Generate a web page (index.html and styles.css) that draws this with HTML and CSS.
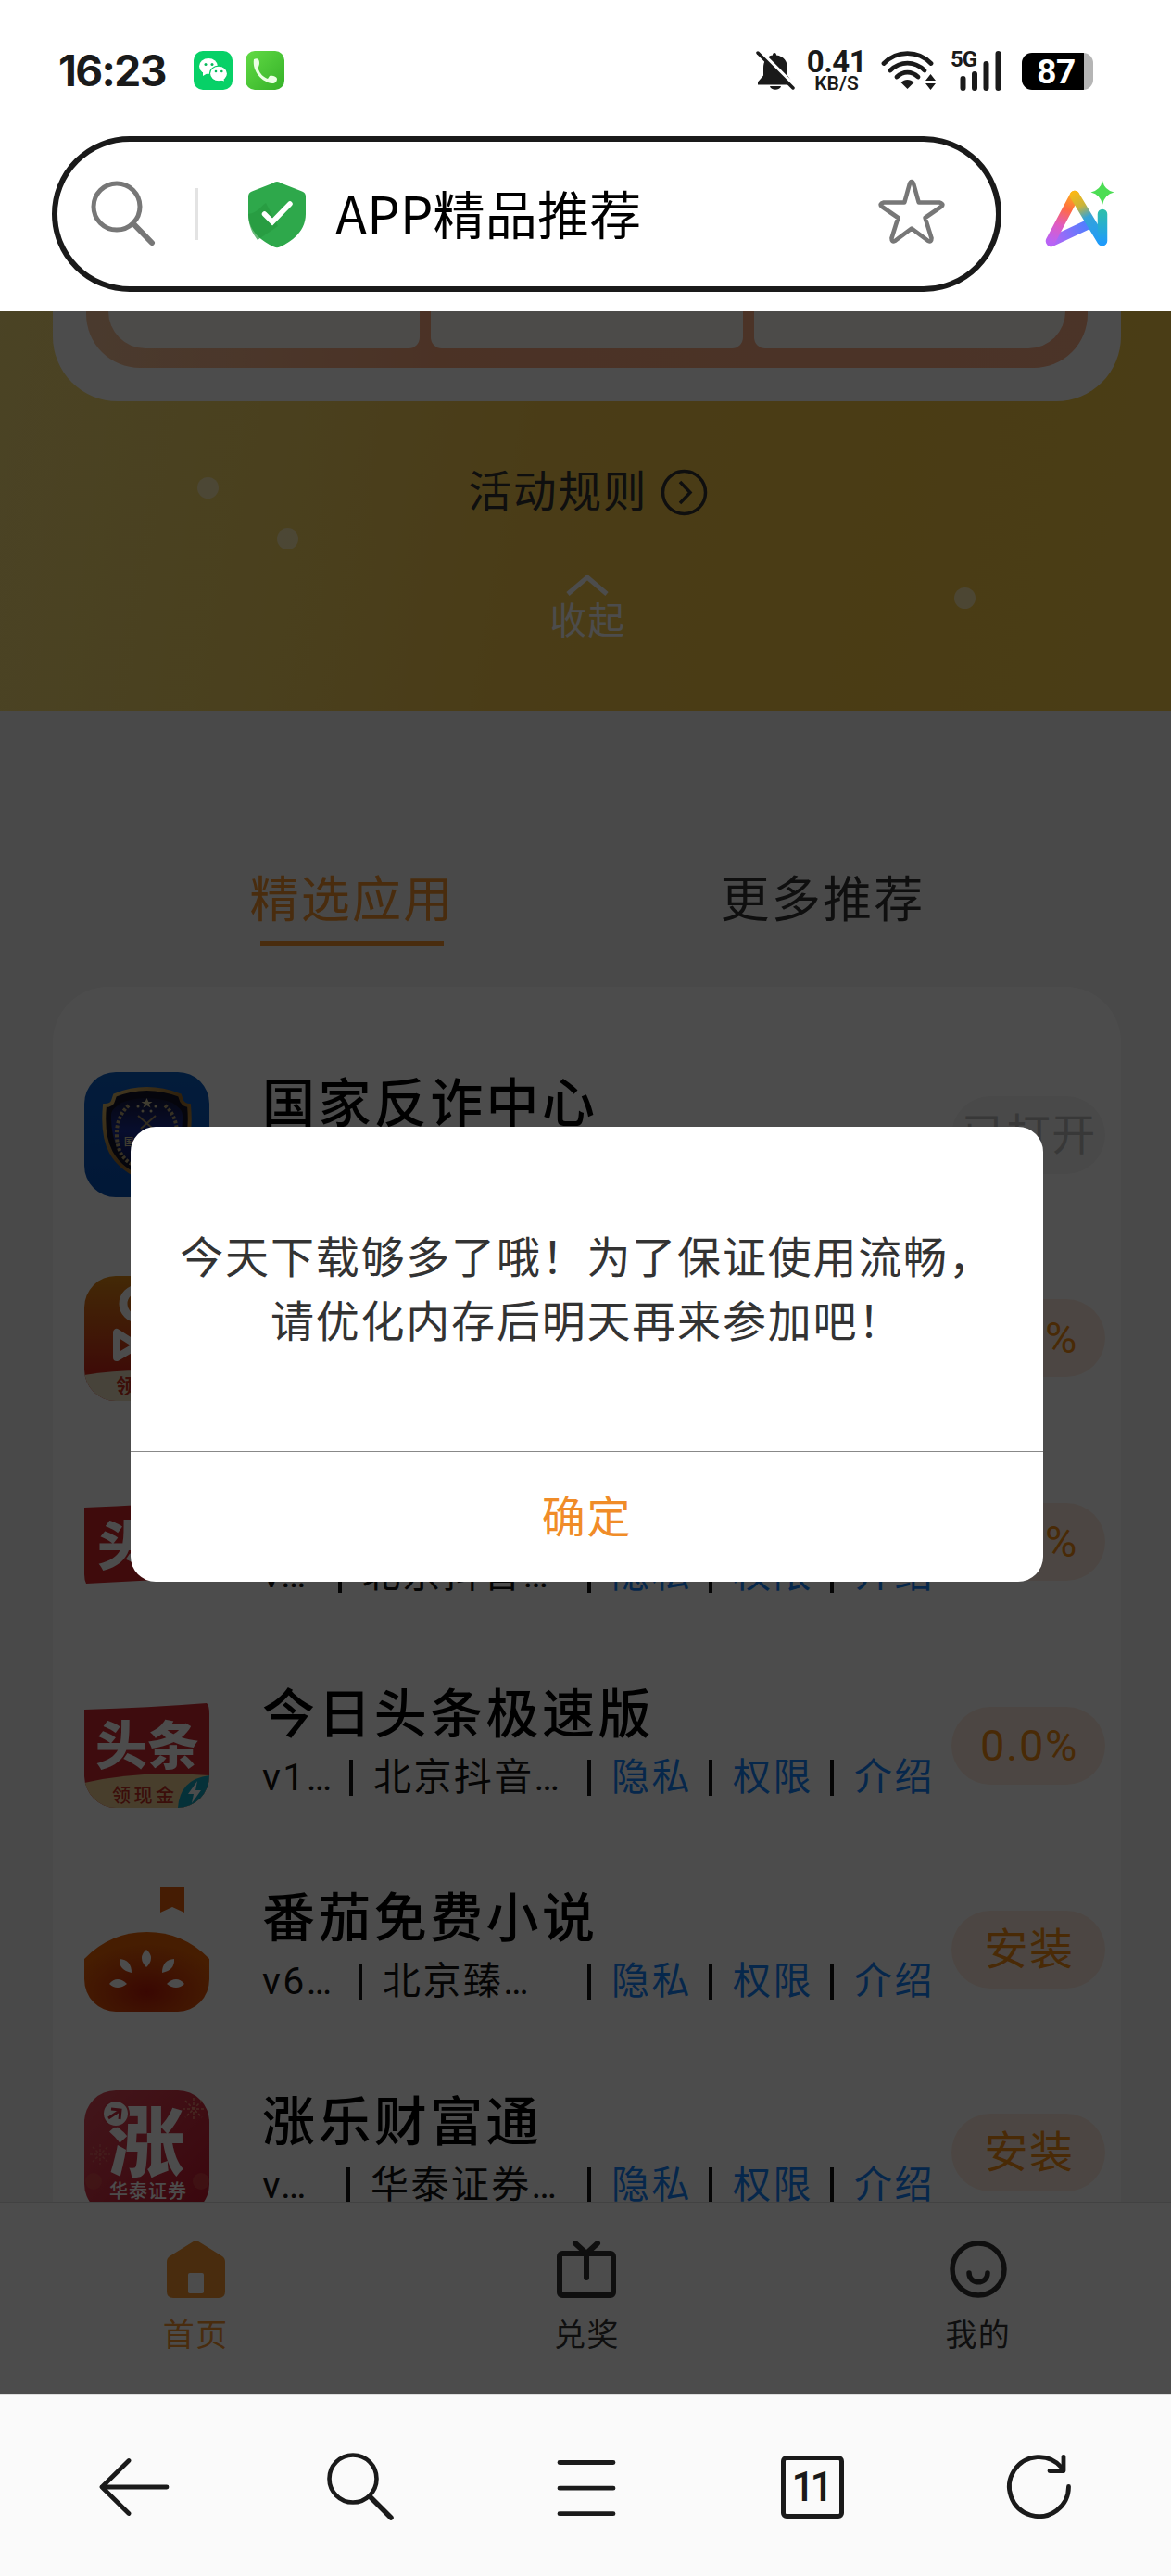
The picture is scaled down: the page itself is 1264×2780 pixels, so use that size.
FILE: index.html
```html
<!DOCTYPE html>
<html lang="zh-CN">

<head>
  <meta charset="UTF-8">
  <meta name="viewport" content="width=device-width, initial-scale=1.0">
  <title>APP精品推荐</title>
  <link rel="stylesheet" href="styles.css">
</head>

<body>

  <!-- 状态栏 -->
  <div class="status">
    <span class="time">16:23</span>
    <svg class="app-dot" viewBox="0 0 42 42">
      <rect width="42" height="42" rx="10" fill="#07d167" />
      <ellipse cx="16" cy="16.5" rx="10" ry="8.5" fill="#fff" />
      <path d="M10 22l0 5 5-3z" fill="#fff" />
      <ellipse cx="27" cy="24.500" rx="9.600" ry="8.300" fill="#fff" stroke="#07cb65" stroke-width="1.300" />
      <path d="M28 31l5 1.500-1-4z" fill="#fff" />
      <circle cx="13" cy="14.500" r="1.500" fill="#07b95c" />
      <circle cx="20" cy="14.500" r="1.500" fill="#07b95c" />
      <circle cx="24" cy="22" r="1.300" fill="#07b95c" />
      <circle cx="30.300" cy="22" r="1.300" fill="#07b95c" />
    </svg>
    <svg class="app-dot phone" viewBox="0 0 42 42">
      <defs>
        <linearGradient id="gPhone" x1="0" y1="0" x2="1" y2="1">
          <stop offset="0" stop-color="#62db45" />
          <stop offset="1" stop-color="#34b128" />
        </linearGradient>
      </defs>
      <rect width="42" height="42" rx="10" fill="url(#gPhone)" />
      <path d="M9 9c4-2 6 0 6 4s-2 4-1 7c2 5 5 8 10 10l2-3c3-1 8 1 8 3 0 3-2 5-5 5C18 34 7 22 9 9z" fill="#eaffe4" />
    </svg>

    <div class="status-right">
      <svg class="bell" width="42" height="43" viewBox="0 0 42 43">
        <path d="M20 2c1.500 0 2 1 2 2.500 8 1 12 7 12 14v8l5 7v3H2v-3l6-7v-8c0-7 3-13 10-14 0-1.500.5-2.500 2-2.500z" fill="#1a1a1a" />
        <path d="M15 38h12c-1 5-11 5-12 0z" fill="#1a1a1a" />
        <path d="M3-1l41 41" stroke="#fff" stroke-width="4" />
        <path d="M2 2l38 38" stroke="#1a1a1a" stroke-width="3.500" stroke-linecap="round" />
      </svg>
      <div class="speed">
        <b>0.41</b>
        <span>KB/S</span>
      </div>
      <svg class="wifi" width="60" height="42" viewBox="0 0 60 42">
        <g fill="none" stroke="#1a1a1a" stroke-width="4.800" stroke-linecap="round">
          <path d="M3 13.500C17-1 40-1 54 13.500" />
          <path d="M10 21c11-10.500 26-10.500 37 0" />
          <path d="M17 28c7-6.500 16-6.500 23 0" />
        </g>
        <path d="M28.500 41l-7-7c4-4 10-4 14 0z" fill="#1a1a1a" />
        <path d="M53.500 25l5.500 7H48zM53.500 42l5.500-7H48z" fill="#1a1a1a" />
      </svg>
      <div class="signal">
        <span>5G</span>
        <svg width="46" height="43" viewBox="0 0 46 43">
          <path d="M3.500 30v10M16 25v15M28.500 14v26M41.500 3v37" stroke="#1a1a1a" stroke-width="6" stroke-linecap="round" />
        </svg>
      </div>
      <div class="battery"><span>87</span></div>
    </div>
  </div>

  <!-- 地址栏 -->
  <div class="address">
    <div class="address-box">
      <svg class="icon-search" width="72" height="72" viewBox="0 0 72 72" fill="none" stroke="#777" stroke-linecap="round">
        <circle cx="28" cy="28" r="25" stroke-width="5" />
        <path d="M46.500 47L66 67" stroke-width="6" />
      </svg>
      <i class="sep"></i>
      <svg class="icon-shield" width="64" height="73" viewBox="0 0 64 73">
        <path d="M32 1c2 0 3 1 4 1.500l23 9c3 1 4 3 4 6V36c0 17-13 29-28 35.500-2 1-4 1-6 0C14 65 1 53 1 36V17.500c0-3 1-5 4-6l23-9C29 2 30 1 32 1z" fill="#2ea84b" />
        <path d="M1 36c10-1 15-10 19-12l13 25-22 15C4 55 1 46 1 36z" fill="#26983f" opacity=".7" />
        <path d="M18.500 36l8.500 8.500L46 25" fill="none" stroke="#fff" stroke-width="5.500" stroke-linecap="round" />
      </svg>
      <span class="page-name">APP精品推荐</span>
      <svg class="icon-star" width="74" height="74" viewBox="0 0 74 74">
        <path d="M37 5Q38.500 5 39.300 8L44.700 27.500H67Q72.500 29 69 32L51.600 44 58.500 66Q58.500 70.500 55 69L37 55.500 19 69Q15.500 70.500 15.500 66L22.400 44 5 32Q1.500 29 7 27.500H29.300L34.700 8Q35.500 5 37 5z" fill="none" stroke="#777" stroke-width="4.600" stroke-linejoin="round" />
      </svg>
    </div>
    <svg class="icon-ai" width="78" height="76" viewBox="0 0 78 76">
      <defs>
        <linearGradient id="gLeft" gradientUnits="userSpaceOnUse" x1="32" y1="12" x2="8" y2="68">
          <stop offset="0" stop-color="#fdb813" />
          <stop offset=".35" stop-color="#ff6a45" />
          <stop offset=".65" stop-color="#e05bc0" />
          <stop offset="1" stop-color="#b863f5" />
        </linearGradient>
        <linearGradient id="gBase" gradientUnits="userSpaceOnUse" x1="8" y1="68" x2="48" y2="48">
          <stop offset="0" stop-color="#b863f5" />
          <stop offset="1" stop-color="#4a80ff" />
        </linearGradient>
        <linearGradient id="gRight" gradientUnits="userSpaceOnUse" x1="33" y1="12" x2="62" y2="68">
          <stop offset="0" stop-color="#fdb813" />
          <stop offset=".28" stop-color="#c9b43a" />
          <stop offset=".5" stop-color="#35a3d8" />
          <stop offset="1" stop-color="#1f9bfa" />
        </linearGradient>
        <linearGradient id="gStem" gradientUnits="userSpaceOnUse" x1="0" y1="32" x2="0" y2="68">
          <stop offset="0" stop-color="#2dc0a8" />
          <stop offset="1" stop-color="#1f9bfa" />
        </linearGradient>
      </defs>
      <g fill="none" stroke-width="10.500" stroke-linecap="round">
        <path d="M7.500 67L48 48" stroke="url(#gBase)" />
        <path d="M33 17L7 66" stroke="url(#gLeft)" />
        <path d="M33 17L62.500 66" stroke="url(#gRight)" />
        <path d="M63 37V66" stroke="url(#gStem)" />
      </g>
      <path d="M63 1q2 10 12.500 12.500Q65 16 63 27q-2-11-12.500-13.500Q61 11 63 1z" fill="#4cdd54" />
    </svg>
  </div>

  <!-- 网页内容 -->
  <div class="page">

    <div class="banner">
      <div class="prize">
        <div class="prize-grid">
          <div></div>
          <div></div>
          <div></div>
        </div>
      </div>
      <div class="rule">
        <span>活动规则</span>
        <svg width="51" height="51" viewBox="0 0 51 51" fill="none" stroke="#333" stroke-width="3.500">
          <circle cx="25.500" cy="25.500" r="23" />
          <path d="M21 14l11 11.500L21 37" />
        </svg>
      </div>
      <svg class="fold-arrow" width="46" height="24" viewBox="0 0 46 24" fill="none" stroke="#fff" stroke-width="5">
        <path d="M2 22L23 4l21 18" />
      </svg>
      <p class="fold">收起</p>
      <i class="dot dot1"></i>
      <i class="dot dot2"></i>
      <i class="dot dot3"></i>
    </div>

    <div class="tabs">
      <div class="tab on">精选应用</div>
      <div class="tab">更多推荐</div>
    </div>

    <div class="list">
      <div class="app">
        <svg class="logo" viewBox="0 0 135 135">
          <defs>
            <linearGradient id="gBlue" x1="0" y1="0" x2="0" y2="1">
              <stop offset="0" stop-color="#0d5fc4" />
              <stop offset="1" stop-color="#0550b8" />
            </linearGradient>
            <linearGradient id="gGold" x1="0" y1="0" x2="1" y2="1">
              <stop offset="0" stop-color="#e8c878" />
              <stop offset=".5" stop-color="#9c6b2a" />
              <stop offset="1" stop-color="#e0b560" />
            </linearGradient>
            <linearGradient id="gNavy" x1="0" y1="0" x2="0" y2="1">
              <stop offset="0" stop-color="#16183c" />
              <stop offset=".45" stop-color="#1a2f9a" />
              <stop offset="1" stop-color="#0c1040" />
            </linearGradient>
          </defs>
          <rect width="135" height="135" rx="34" fill="url(#gBlue)" />
          <path d="M33 25q34-14 70 0l2 6q3 5 8 5c4 42-6 65-45 81C29 102 18 78 22 36q8 0 9-5z" fill="#111328" stroke="url(#gGold)" stroke-width="4" />
          <path d="M40 33q27-10 55 0c8 6 11 8 11 14 0 30-9 48-38 61C39 96 29 78 29 47c0-6 3-8 11-14z" fill="url(#gNavy)" />
          <path d="M48 36q-14 12-13 34t18 30M87 36q14 12 13 34t-18 30" fill="none" stroke="#b9a676" stroke-width="4" stroke-dasharray="3 2" />
          <path d="M67.500 28l1.800 4h4.200l-3.500 2.500 1.500 4-4-2.500-4 2.500 1.500-4-3.500-2.500h4.200z" fill="#d8cda0" />
          <circle cx="58" cy="37" r="1.500" fill="#d8cda0" />
          <circle cx="77" cy="37" r="1.500" fill="#d8cda0" />
          <circle cx="63" cy="42" r="1.500" fill="#d8cda0" />
          <circle cx="72" cy="42" r="1.500" fill="#d8cda0" />
          <path d="M58 47l16 14M77 47L61 61" stroke="#a9936a" stroke-width="2" />
          <text x="43" y="79" font-size="10" font-weight="700" fill="#d8cda0">国家反诈</text>
        </svg>
        <div class="info">
          <h3>国家反诈中心</h3>
          <div class="sub"><span class="version">v2…</span><i></i><span class="company">公安部…</span><i></i><a>隐私</a><i></i><a>权限</a><i></i><a>介绍</a></div>
        </div>
        <div class="btn opened">已打开</div>
      </div>

      <div class="app">
        <svg class="logo" viewBox="0 0 135 135">
          <defs>
            <linearGradient id="gKuai" x1="0" y1="0" x2="0" y2="1">
              <stop offset="0" stop-color="#e08a14" />
              <stop offset=".75" stop-color="#cf2a1a" />
            </linearGradient>
            <clipPath id="rc"><rect width="135" height="135" rx="34" /></clipPath>
          </defs>
          <g clip-path="url(#rc)">
            <rect width="135" height="135" fill="url(#gKuai)" />
            <path d="M0 107q60-10 135 0v28H0z" fill="#efe0c4" />
            <circle cx="58" cy="30" r="16" fill="none" stroke="#fff" stroke-width="9" />
            <circle cx="92" cy="34" r="12" fill="none" stroke="#fff" stroke-width="8" />
            <path d="M35 61v27l22-13z" fill="none" stroke="#fff" stroke-width="8" stroke-linejoin="round" />
            <rect x="60" y="57" width="46" height="36" rx="8" fill="#fff" />
            <text x="34" y="126" font-size="21" font-weight="700" fill="#c9301c">领现金</text>
          </g>
        </svg>
        <div class="info">
          <h3>快手极速版</h3>
          <div class="sub"><span class="version">v1…</span><i></i><span class="company">北京快手…</span><i></i><a>隐私</a><i></i><a>权限</a><i></i><a>介绍</a></div>
        </div>
        <div class="btn">0.0%</div>
      </div>

      <div class="app">
        <svg class="logo" viewBox="0 0 135 135">
          <path d="M0 30Q70 27 135 22V106Q70 108 2 112Q0 108 0 102z" fill="#d3262a" />
          <text x="14" y="92" font-size="57" font-weight="900" fill="#fff">头条</text>
        </svg>
        <div class="info">
          <h3>今日头条</h3>
          <div class="sub"><span class="version">v…</span><i></i><span class="company">北京抖音…</span><i></i><a>隐私</a><i></i><a>权限</a><i></i><a>介绍</a></div>
        </div>
        <div class="btn">0.0%</div>
      </div>

      <div class="app">
        <svg class="logo" viewBox="0 0 135 135">
          <defs>
            <clipPath id="tc"><path d="M0 29Q70 27 132 22Q135 24 135 34V100A34 35 0 0 1 101 135H34A34 35 0 0 1 0 101z" /></clipPath>
          </defs>
          <g clip-path="url(#tc)">
            <rect width="135" height="135" fill="#d12a31" />
            <path d="M0 108q60-14 135-8v35H0z" fill="#f0cf94" />
            <path d="M135 100q-32 4-34 35h34z" fill="#12a5c0" />
            <path d="M122 106l-10 14h6l-2 10 10-14h-6z" fill="#fff" />
            <text x="12" y="88" font-size="56" font-weight="900" fill="#fff">头条</text>
            <text x="30" y="129" font-size="20" font-weight="500" letter-spacing="3.500" fill="#c53124">领现金</text>
          </g>
        </svg>
        <div class="info">
          <h3>今日头条极速版</h3>
          <div class="sub"><span class="version">v1…</span><i></i><span class="company">北京抖音…</span><i></i><a>隐私</a><i></i><a>权限</a><i></i><a>介绍</a></div>
        </div>
        <div class="btn">0.0%</div>
      </div>

      <div class="app">
        <svg class="logo" viewBox="0 0 135 135">
          <defs>
            <radialGradient id="gTomato" cx=".5" cy=".75" r=".6">
              <stop offset="0" stop-color="#c01a08" />
              <stop offset=".5" stop-color="#d64208" />
              <stop offset="1" stop-color="#ea6206" />
            </radialGradient>
          </defs>
          <path d="M82 0h26v28l-13-6-13 6z" fill="#e8600c" />
          <path d="M0 78Q28 49 67.500 49T135 78V100A34 35 0 0 1 101 135H34A34 35 0 0 1 0 100z" fill="url(#gTomato)" />
          <g fill="#fff">
            <path d="M67 68q5 4 5 9 0 5-5 10-5-5-5-10 0-5 5-9z" />
            <path d="M38 78q13 1 13 15-14-3-13-15z" />
            <path d="M97 78q-13 1-13 15 14-3 13-15z" />
            <path d="M27 105q4-5 9-5t10 5q-5 4-10 4t-9-4z" />
            <path d="M108 105q-4-5-9-5t-10 5q5 4 10 4t9-4z" />
          </g>
        </svg>
        <div class="info">
          <h3>番茄免费小说</h3>
          <div class="sub"><span class="version">v6…</span><i></i><span class="company">北京臻…</span><i></i><a>隐私</a><i></i><a>权限</a><i></i><a>介绍</a></div>
        </div>
        <div class="btn">安装</div>
      </div>

      <div class="app">
        <svg class="logo" viewBox="0 0 135 135">
          <defs>
            <linearGradient id="gZhang" x1="0" y1="0" x2="1" y2="1">
              <stop offset="0" stop-color="#de4a5a" />
              <stop offset="1" stop-color="#c3152c" />
            </linearGradient>
          </defs>
          <rect width="135" height="135" rx="34" fill="url(#gZhang)" />
          <g stroke="#ec8a72" stroke-width="1.500" stroke-dasharray="3 2">
            <path d="M118 8v24M106 20h24M109 11l18 18M127 11l-18 18" />
            <path d="M17 58v22M6 69h22M9 61l16 16M25 61L9 77" opacity=".5" />
          </g>
          <circle cx="10" cy="98" r="9" fill="#e0584e" opacity=".5" />
          <circle cx="126" cy="98" r="9" fill="#e0584e" opacity=".5" />
          <text x="26" y="86" font-size="82" font-weight="900" fill="#fff">涨</text>
          <circle cx="34" cy="25" r="14" fill="#fff" stroke="#d63c4d" stroke-width="2" />
          <path d="M26 30l12-8M29 20l10 1-1 10" fill="none" stroke="#c92b3f" stroke-width="3" />
          <text x="27" y="116" font-size="20" font-weight="500" letter-spacing="1" fill="#fff">华泰证券</text>
        </svg>
        <div class="info">
          <h3>涨乐财富通</h3>
          <div class="sub"><span class="version">v…</span><i></i><span class="company">华泰证券…</span><i></i><a>隐私</a><i></i><a>权限</a><i></i><a>介绍</a></div>
        </div>
        <div class="btn">安装</div>
      </div>
    </div>

    <div class="tabbar">
      <div class="tabbar-item on">
        <svg width="63" height="62" viewBox="0 0 63 62">
          <path d="M28 1.500q3.500-2.500 7 0L60 17q3 2 3 6v32q0 7-7 7H7q-7 0-7-7V23q0-4 3-6z" fill="#f39530" />
          <rect x="23" y="35" width="17" height="22" rx="2" fill="#fff" />
        </svg>
        <span>首页</span>
      </div>
      <div class="tabbar-item">
        <svg width="64" height="62" viewBox="0 0 64 62" fill="none" stroke="#333" stroke-width="6" stroke-linecap="round">
          <rect x="3" y="14" width="58" height="45" rx="3" />
          <path d="M32 14v26M20 3l12 11L44 3" />
        </svg>
        <span>兑奖</span>
      </div>
      <div class="tabbar-item">
        <svg width="62" height="62" viewBox="0 0 62 62" fill="none" stroke="#333" stroke-width="5.500" stroke-linecap="round">
          <circle cx="31" cy="31" r="28" />
          <path d="M21 35c0 13 20 13 20 0" />
        </svg>
        <span>我的</span>
      </div>
    </div>

    <!-- 弹窗 -->
    <div class="mask">
      <div class="dialog">
        <div class="dialog-text">今天下载够多了哦！为了保证使用流畅，<br>请优化内存后明天再来参加吧！</div>
        <div class="dialog-btn">确定</div>
      </div>
    </div>
  </div>

  <!-- 浏览器底部工具栏 -->
  <div class="toolbar">
    <svg viewBox="0 0 76 76">
      <path d="M3 38H73M32 9.500L3 38l29 28.500" stroke-width="4.800" />
    </svg>
    <svg viewBox="0 0 76 76">
      <circle cx="30" cy="29" r="25.500" stroke-width="4.600" />
      <path d="M49 49L71 71" stroke-width="5.500" />
    </svg>
    <svg viewBox="0 0 76 76">
      <path d="M9 11.500H67M9 39.200H67M9 66.700H67" stroke-width="4.800" />
    </svg>
    <div class="windows">11</div>
    <svg viewBox="0 0 76 76">
      <path d="M70.500 37.500A32 32 0 1 1 63 17" stroke-width="4.800" />
      <path d="M65 5.500V20.500H50" stroke-width="4.800" />
    </svg>
  </div>

</body>

</html>
```

FILE: styles.css
```css
* {
  box-sizing: border-box;
}

body {
  margin: 0;
  width: 1264px;
  height: 2780px;
  display: flex;
  flex-direction: column;
  overflow: hidden;
  background-color: #fff;
  font-family: Roboto, "Noto Sans CJK SC", sans-serif;
}

h3,
p {
  margin: 0;
}

svg {
  display: block;
  flex: none;
}

/* 状态栏 */
.status {
  height: 147px;
  padding: 53px 84px 0 63px;
  display: flex;
  align-items: flex-start;
  color: #1a1a1a;
}

.time {
  width: 146px;
  font: 700 46px/47px Inter, sans-serif;
  letter-spacing: -1.6px;
}

.app-dot {
  width: 42px;
  height: 42px;
  margin-top: 2px;
}

.phone {
  margin-left: 14px;
}

.status-right {
  margin-left: auto;
  display: flex;
  align-items: flex-start;
}

.bell {
  margin-top: 2px;
}

.speed {
  width: 66px;
  margin-left: 12px;
  display: flex;
  flex-direction: column;
  align-items: center;
  font-family: Roboto, sans-serif;
}

.speed b {
  font-size: 33px;
  line-height: 27px;
  letter-spacing: -0.5px;
}

.speed span {
  font-size: 21px;
  font-weight: 600;
  line-height: 20px;
}

.wifi {
  margin: 2px 0 0 15px;
}

.signal {
  position: relative;
  margin: 2px 0 0 25px;
}

.signal span {
  position: absolute;
  top: -1px;
  left: -10px;
  font: 700 24px/20px Roboto, sans-serif;
  letter-spacing: -1px;
}

.battery {
  width: 77px;
  height: 40px;
  margin: 4px 0 0 21px;
  padding-right: 3px;
  border-radius: 11px;
  background: linear-gradient(90deg, #000 67px, #b5b5b5 67px);
  color: #fff;
  font: 700 37px/42px Roboto, sans-serif;
  text-align: center;
  letter-spacing: -0.5px;
}

/* 地址栏 */
.address {
  height: 189px;
  padding-left: 56px;
  display: flex;
}

.address-box {
  width: 1025px;
  height: 168px;
  padding-left: 36px;
  border: 6px solid #1a1a1a;
  border-radius: 84px;
  display: flex;
  align-items: center;
}

.sep {
  width: 4px;
  height: 56px;
  margin: 0 53px 0 40px;
  background-color: #e3e3e3;
}

.page-name {
  flex: 1;
  margin: -4px 0 0 31px;
  font-family: "Noto Sans CJK SC", sans-serif;
  font-size: 56px;
  line-height: 80px;
  letter-spacing: 0.2px;
  color: #000;
}

.icon-star {
  margin: 0 54px 6px 0;
}

.icon-ai {
  margin: 47px 0 0 46px;
}

/* 网页内容 */
.page {
  position: relative;
  height: 2248px;
  display: flex;
  flex-direction: column;
  overflow: hidden;
  background-color: #f5f5f5;
}

.banner {
  position: relative;
  height: 431px;
  padding-left: 3px;
  display: flex;
  flex-direction: column;
  align-items: center;
  background: radial-gradient(circle at 0 60%, #fbe05a33 0 22%, transparent 32%), linear-gradient(100deg, #f9e084 0%, #f7d566 25%, #f9ca4e 45%, #f9c945 75%, #f8cd4c 100%);
}

.prize {
  width: 1153px;
  height: 97px;
  padding: 0 36px 36px;
  border-radius: 0 0 70px 70px;
  background-color: #fff;
}

.prize-grid {
  height: 61px;
  padding: 0 24px 21px;
  border-radius: 0 0 58px 58px;
  display: flex;
  gap: 12px;
  background: linear-gradient(90deg, #f9c39a, #fba87e 35%, #faad86);
}

.prize-grid div {
  flex: 1;
  border-radius: 0 0 12px 12px;
  background: #fdfbf6;
}

.prize-grid div:first-child {
  border-bottom-left-radius: 40px;
}

.prize-grid div:last-child {
  border-bottom-right-radius: 40px;
}

.rule {
  margin-top: 67px;
  padding-left: 2px;
  display: flex;
  align-items: center;
  font-size: 46.5px;
  line-height: 62px;
  letter-spacing: 2px;
  color: #333;
}

.rule svg {
  margin-left: 13px;
}

.fold-arrow {
  margin-top: 57px;
}

.fold {
  padding-left: 2px;
  font-size: 39.5px;
  line-height: 56px;
  letter-spacing: 1.5px;
  color: #fff;
}

.dot {
  position: absolute;
  width: 23px;
  height: 23px;
  border-radius: 50%;
  background-color: #fff3c4;
  opacity: 0.8;
}

.dot1 {
  left: 213px;
  top: 179px;
}

.dot2 {
  left: 299px;
  top: 234px;
}

.dot3 {
  left: 1030px;
  top: 298px;
}

/* 标签 */
.tabs {
  height: 298px;
  padding: 169px 122px 0 126px;
  display: flex;
}

.tab {
  flex: 1;
  height: 87px;
  font-size: 53px;
  line-height: 72px;
  letter-spacing: 2.3px;
  text-align: center;
  color: #333;
}

.tab.on {
  color: #f39530;
}

.tab.on::after {
  content: '';
  display: block;
  width: 198px;
  height: 6px;
  margin: 7px auto 0;
  background-color: #f39530;
}

/* 应用列表 */
.list {
  flex: 1;
  width: 1153px;
  margin-left: 57px;
  padding: 92px 17px 0 34px;
  border-radius: 60px 60px 0 0;
  overflow: hidden;
  background-color: #fff;
}

.app {
  height: 135px;
  margin-bottom: 84.8px;
  display: flex;
  align-items: center;
}

.logo {
  width: 135px;
  height: 135px;
  font-family: "Noto Sans CJK SC", sans-serif;
}

.info {
  height: 135px;
  margin-left: 57px;
  flex: 1;
}

.info h3 {
  font-size: 57px;
  font-weight: 500;
  line-height: 70px;
  letter-spacing: 3.4px;
  white-space: nowrap;
  color: #000;
}

.sub {
  display: flex;
  align-items: center;
  font-size: 41px;
  line-height: 65px;
  letter-spacing: 2.4px;
  white-space: nowrap;
  color: #111;
}

.sub i {
  flex: none;
  width: 4px;
  height: 39px;
  background-color: #111;
}

.sub a {
  width: 127px;
  padding-left: 22px;
  color: #1684fc;
}

.version {
  width: 94px;
}

.company {
  width: 253px;
  padding-left: 22px;
}

.app:nth-child(3) .version {
  width: 82px;
}

.app:nth-child(3) .company {
  width: 265px;
}

.app:nth-child(5) .version {
  width: 104px;
}

.app:nth-child(5) .company {
  width: 243px;
}

.app:nth-child(6) .version {
  width: 91px;
}

.app:nth-child(6) .company {
  width: 256px;
}

.btn {
  width: 169px;
  height: 84px;
  padding-left: 2px;
  border-radius: 42px;
  background-color: #ffece0;
  font-size: 47px;
  line-height: 84px;
  letter-spacing: 1.6px;
  text-align: center;
  white-space: nowrap;
  color: #f58c14;
}

.btn.opened {
  background-color: #f5f5f5;
  color: #bbb;
}

/* 底部导航 */
.tabbar {
  width: 1267px;
  height: 208px;
  padding-top: 40px;
  border-top: 2px solid #ddd;
  display: flex;
  background-color: #fff;
}

.tabbar-item {
  flex: 1;
  display: flex;
  flex-direction: column;
  align-items: center;
  font-size: 34px;
  line-height: 48px;
  letter-spacing: 1.4px;
  color: #333;
}

.tabbar-item span {
  margin-top: 16px;
}

.tabbar-item.on {
  color: #f39530;
}

/* 弹窗 */
.mask {
  position: absolute;
  inset: 0;
  padding: 3px 0 0 3px;
  display: flex;
  align-items: center;
  justify-content: center;
  background-color: rgba(0, 0, 0, 0.7);
}

.dialog {
  width: 985px;
  height: 491px;
  border-radius: 27px;
  background-color: #fff;
  letter-spacing: 1.8px;
  text-align: center;
}

.dialog-text {
  height: 351px;
  padding-top: 107px;
  border-bottom: 1px solid #888;
  font-size: 47px;
  line-height: 69px;
  white-space: nowrap;
  color: #333;
}

.dialog-btn {
  font-size: 47px;
  line-height: 142px;
  color: #f08c28;
}

/* 浏览器工具栏 */
.toolbar {
  height: 196px;
  padding: 2px 105px 0 107px;
  display: flex;
  align-items: center;
  justify-content: space-between;
  border-top: 1px solid #ddd;
  background-color: #fafafa;
}

.toolbar svg {
  width: 76px;
  height: 76px;
  fill: none;
  stroke: #1a1a1a;
  stroke-linecap: round;
  stroke-linejoin: round;
}

.windows {
  width: 68px;
  height: 68px;
  margin: 0 4px;
  border: 5px solid #1a1a1a;
  border-radius: 6px;
  font: 500 44px/59px Roboto, sans-serif;
  letter-spacing: -5px;
  text-indent: -5px;
  text-align: center;
  color: #1a1a1a;
}
```
